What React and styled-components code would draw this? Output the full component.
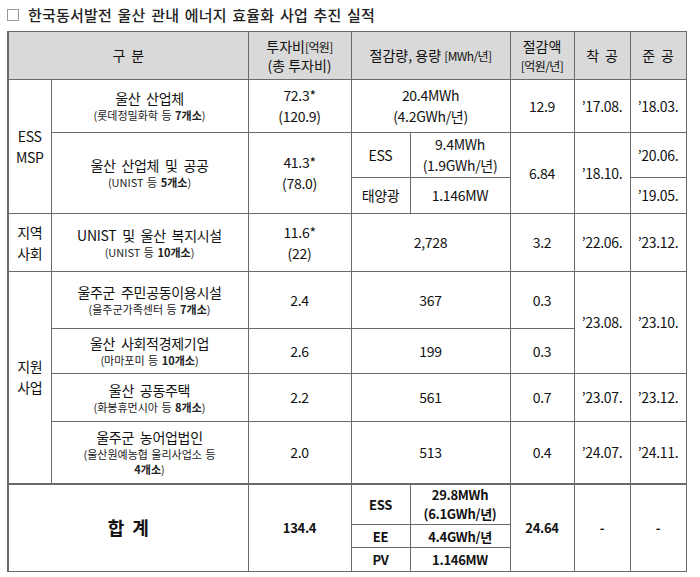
import styled, { createGlobalStyle } from "styled-components";

const GlobalStyle = createGlobalStyle`
  html, body {
    margin: 0;
    padding: 0;
    background: #ffffff;
  }
  body {
    font-family: "Noto Sans CJK KR", "Noto Sans", sans-serif;
    color: #111;
  }
`;

const COLS = [43, 197, 103, 59, 100, 64, 56, 56];

const Page = styled.div`
  width: 700px;
  height: 577px;
  box-sizing: border-box;
  padding: 6px 0 0 7px;
`;

const Title = styled.div`
  display: flex;
  align-items: center;
  height: 17px;
  margin: 0 0 8px 0;
  font-size: 15px;
  font-weight: 500;
  color: #222;
  letter-spacing: 0.2px;
  word-spacing: 2px;
`;

const Square = styled.span`
  display: inline-block;
  width: 10px;
  height: 10px;
  border: 1px solid #9a9a9a;
  margin: 0 9px 0 0;
  flex-shrink: 0;
`;

const Table = styled.table`
  border-collapse: collapse;
  table-layout: fixed;
  width: 678px;
  border-left: 2px solid #6a6a6a;
`;

const Row = styled.tr`
  height: ${(p) => p.h}px;
`;

const Head = styled.th`
  background: #d9d9d9;
  border: 1px solid #6a6a6a;
  font-weight: 400;
  font-size: 14px;
  line-height: 19px;
  padding: 0;
  text-align: center;
  vertical-align: middle;
  letter-spacing: ${(p) => (p.wide ? "6px" : "0")};
  text-indent: ${(p) => (p.wide ? "6px" : "0")};
`;

const Cell = styled.td`
  border: 1px solid #6a6a6a;
  border-top-width: ${(p) => (p.thick ? "2px" : "1px")};
  padding: 0;
  text-align: center;
  vertical-align: middle;
  font-size: ${(p) => (p.big ? "18px" : p.bold ? "13px" : "14px")};
  font-weight: ${(p) => (p.bold ? 700 : 400)};
  line-height: ${(p) => (p.tight ? "19px" : "21px")};
  letter-spacing: ${(p) => (p.big ? "8px" : "-0.3px")};
  text-indent: ${(p) => (p.big ? "8px" : "0")};
  color: #111;
`;

const Line = styled.span`
  display: block;
`;

const Small = styled.span`
  font-size: 12px;
  letter-spacing: -0.6px;
`;

const Name = styled.span`
  display: block;
  font-size: 14px;
  line-height: 19px;
  word-spacing: 3px;
`;

const Sub = styled.span`
  display: block;
  font-size: 11px;
  line-height: 15px;
  letter-spacing: 0;
  word-spacing: 1px;
  color: #222;
  padding: 0 24px;
`;

const Count = styled.span`
  white-space: nowrap;
`;

const Strong = styled.b`
  font-weight: 700;
`;

const Project = ({ name, pre, count }) => (
  <>
    <Name>{name}</Name>
    <Sub>
      ({pre}{" "}
      <Count>
        <Strong>{count}</Strong>)
      </Count>
    </Sub>
  </>
);

export default function App() {
  return (
    <Page>
      <GlobalStyle />
      <Title>
        <Square />
        한국동서발전 울산 관내 에너지 효율화 사업 추진 실적
      </Title>
      <Table>
        <colgroup>
          {COLS.map((w, i) => (
            <col key={i} style={{ width: w }} />
          ))}
        </colgroup>
        <tbody>
          <Row h={48}>
            <Head colSpan={2} wide>
              구분
            </Head>
            <Head>
              <Line>
                투자비<Small>[억원]</Small>
              </Line>
              <Line>(총 투자비)</Line>
            </Head>
            <Head colSpan={2}>
              절감량, 용량 <Small>[MWh/년]</Small>
            </Head>
            <Head>
              <Line>절감액</Line>
              <Line>
                <Small>[억원/년]</Small>
              </Line>
            </Head>
            <Head wide>착공</Head>
            <Head wide>준공</Head>
          </Row>

          <Row h={53}>
            <Cell rowSpan={3}>
              <Line>ESS</Line>
              <Line>MSP</Line>
            </Cell>
            <Cell>
              <Project name="울산 산업체" pre="롯데정밀화학 등" count="7개소" />
            </Cell>
            <Cell>
              <Line>72.3*</Line>
              <Line>(120.9)</Line>
            </Cell>
            <Cell colSpan={2}>
              <Line>20.4MWh</Line>
              <Line>(4.2GWh/년)</Line>
            </Cell>
            <Cell>12.9</Cell>
            <Cell>’17.08.</Cell>
            <Cell>’18.03.</Cell>
          </Row>
          <Row h={45}>
            <Cell rowSpan={2}>
              <Project name="울산 산업체 및 공공" pre="UNIST 등" count="5개소" />
            </Cell>
            <Cell rowSpan={2}>
              <Line>41.3*</Line>
              <Line>(78.0)</Line>
            </Cell>
            <Cell>ESS</Cell>
            <Cell>
              <Line>9.4MWh</Line>
              <Line>(1.9GWh/년)</Line>
            </Cell>
            <Cell rowSpan={2}>6.84</Cell>
            <Cell rowSpan={2}>’18.10.</Cell>
            <Cell>’20.06.</Cell>
          </Row>
          <Row h={36}>
            <Cell>태양광</Cell>
            <Cell>1.146MW</Cell>
            <Cell>’19.05.</Cell>
          </Row>

          <Row h={58}>
            <Cell>
              <Line>지역</Line>
              <Line>사회</Line>
            </Cell>
            <Cell>
              <Project name="UNIST 및 울산 복지시설" pre="UNIST 등" count="10개소" />
            </Cell>
            <Cell>
              <Line>11.6*</Line>
              <Line>(22)</Line>
            </Cell>
            <Cell colSpan={2}>2,728</Cell>
            <Cell>3.2</Cell>
            <Cell>’22.06.</Cell>
            <Cell>’23.12.</Cell>
          </Row>

          <Row h={57}>
            <Cell rowSpan={4}>
              <Line>지원</Line>
              <Line>사업</Line>
            </Cell>
            <Cell>
              <Project name="울주군 주민공동이용시설" pre="울주군가족센터 등" count="7개소" />
            </Cell>
            <Cell>2.4</Cell>
            <Cell colSpan={2}>367</Cell>
            <Cell>0.3</Cell>
            <Cell rowSpan={2}>’23.08.</Cell>
            <Cell rowSpan={2}>’23.10.</Cell>
          </Row>
          <Row h={45}>
            <Cell>
              <Project name="울산 사회적경제기업" pre="마마포미 등" count="10개소" />
            </Cell>
            <Cell>2.6</Cell>
            <Cell colSpan={2}>199</Cell>
            <Cell>0.3</Cell>
          </Row>
          <Row h={48}>
            <Cell>
              <Project name="울산 공동주택" pre="화봉휴먼시아 등" count="8개소" />
            </Cell>
            <Cell>2.2</Cell>
            <Cell colSpan={2}>561</Cell>
            <Cell>0.7</Cell>
            <Cell>’23.07.</Cell>
            <Cell>’23.12.</Cell>
          </Row>
          <Row h={62}>
            <Cell>
              <Project name="울주군 농어업법인" pre="울산원예농협 울리사업소 등" count="4개소" />
            </Cell>
            <Cell>2.0</Cell>
            <Cell colSpan={2}>513</Cell>
            <Cell>0.4</Cell>
            <Cell>’24.07.</Cell>
            <Cell>’24.11.</Cell>
          </Row>

          <Row h={41}>
            <Cell colSpan={2} rowSpan={3} bold big thick>
              합계
            </Cell>
            <Cell rowSpan={3} bold thick>
              134.4
            </Cell>
            <Cell bold thick>
              ESS
            </Cell>
            <Cell bold thick tight>
              <Line>29.8MWh</Line>
              <Line>(6.1GWh/년)</Line>
            </Cell>
            <Cell rowSpan={3} bold thick>
              24.64
            </Cell>
            <Cell rowSpan={3} bold thick>
              -
            </Cell>
            <Cell rowSpan={3} bold thick>
              -
            </Cell>
          </Row>
          <Row h={23}>
            <Cell bold tight>
              EE
            </Cell>
            <Cell bold tight>
              4.4GWh/년
            </Cell>
          </Row>
          <Row h={24}>
            <Cell bold tight>
              PV
            </Cell>
            <Cell bold tight>
              1.146MW
            </Cell>
          </Row>
        </tbody>
      </Table>
    </Page>
  );
}
